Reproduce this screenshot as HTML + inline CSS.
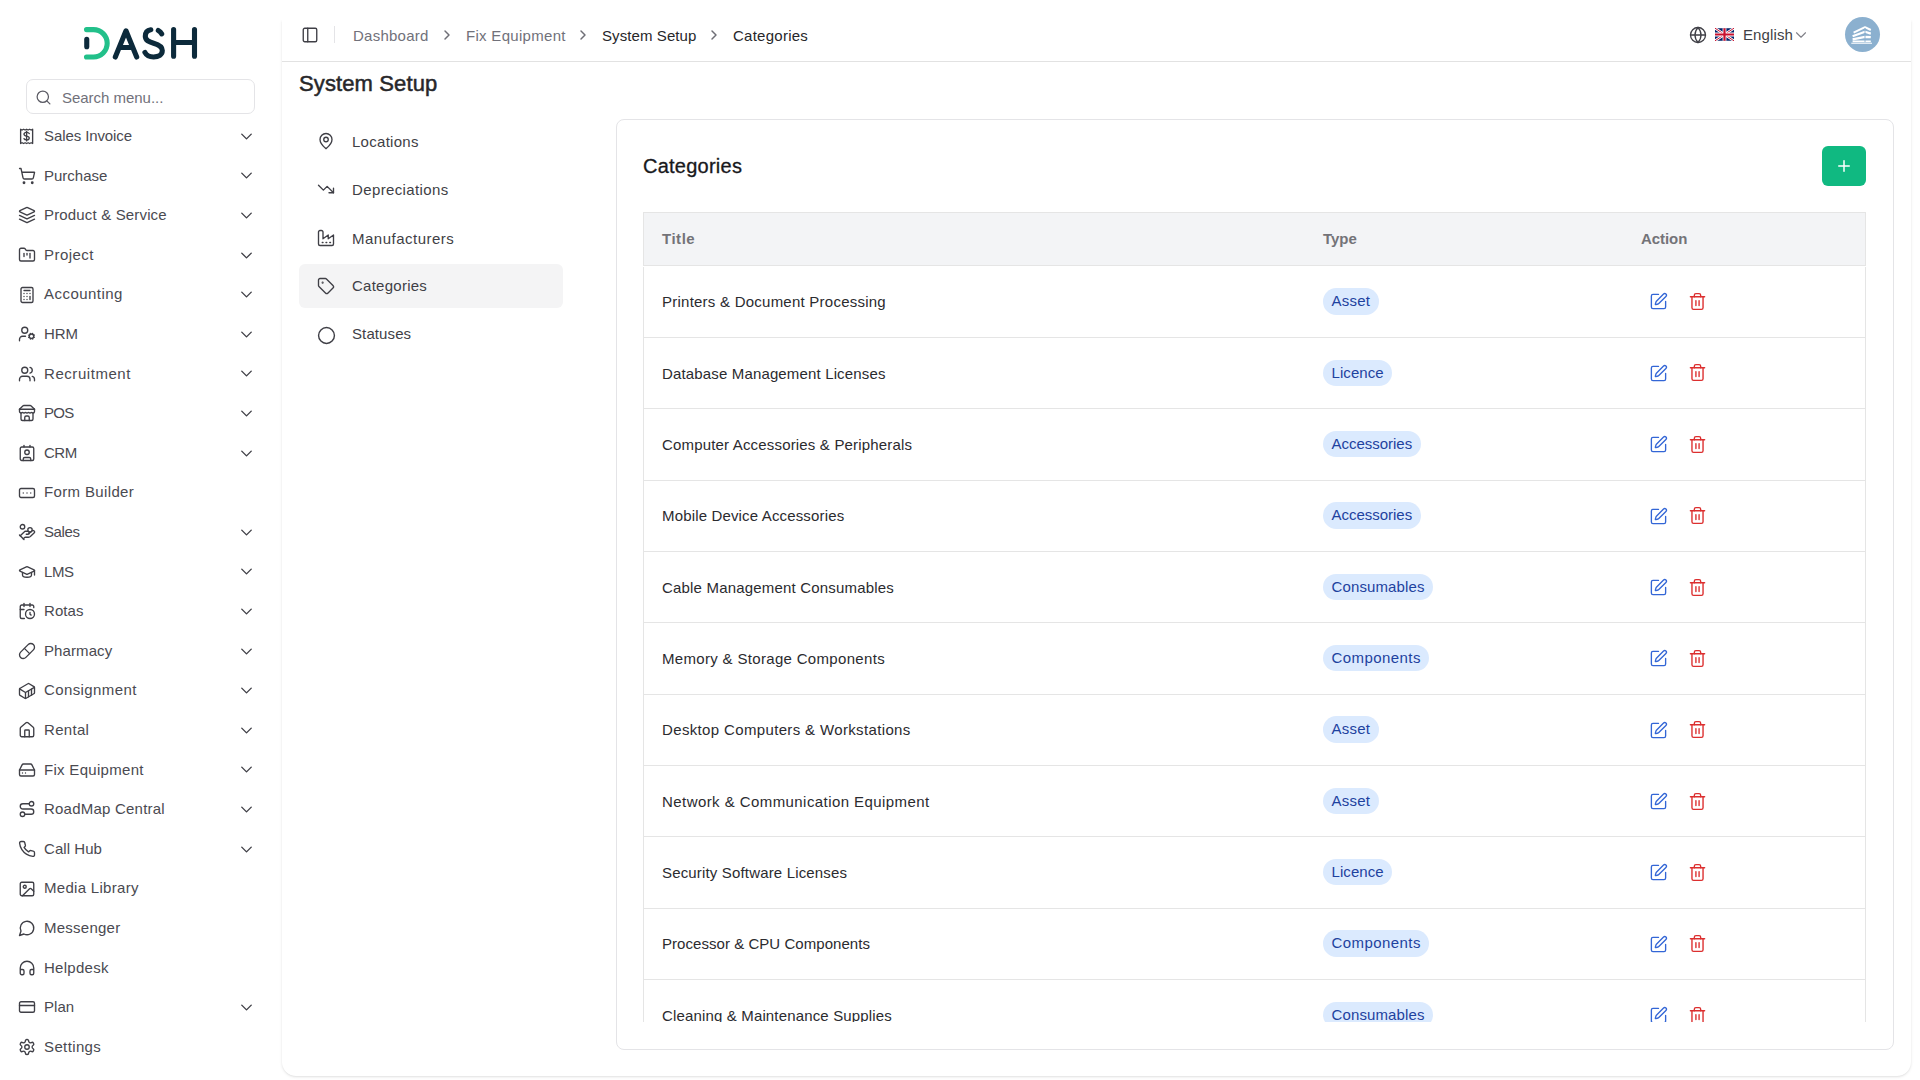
<!DOCTYPE html><html><head><meta charset="utf-8"><title>System Setup</title><style>
*{box-sizing:border-box;margin:0;padding:0}
html,body{width:1920px;height:1080px;overflow:hidden;background:#fff;font-family:"Liberation Sans", sans-serif;color:#3f3f46}
.abs{position:absolute}
svg{display:block}
.side-item{position:absolute;left:0;width:281px;height:40px}
.side-item .ic{position:absolute;left:18px;top:11.3px;color:#3f3f46}
.side-item .tx{position:absolute;left:44px;top:10px;font-size:15px;line-height:20px;white-space:nowrap;color:#4a4a51}
.side-item .cv{position:absolute;left:236.7px;top:10.9px;color:#3f3f46}
.crumb{position:absolute;top:25.5px;font-size:15px;line-height:20px;white-space:nowrap}
.sub{position:absolute;left:299px;width:264px;height:44px;border-radius:6px}
.sub .ic{position:absolute;left:18px;top:12.3px;color:#3f3f46}
.sub .tx{position:absolute;left:53px;top:11.6px;font-size:15px;line-height:20px;color:#3f3f46;white-space:nowrap}
.row{position:absolute;left:643px;width:1223px;border-left:1px solid #e5e5e5;border-right:1px solid #e5e5e5;border-bottom:1px solid #e5e5e5}
.row .t{position:absolute;left:18px;font-size:15px;line-height:20px;color:#2b2b2f;white-space:nowrap}
.badge{position:absolute;left:679px;height:26.5px;border-radius:13.25px;background:#dbeafe;color:#1e429f;font-size:15px;line-height:26.5px;padding:0 8.6px;white-space:nowrap}
.act{position:absolute}
</style></head><body><svg class="abs" style="left:80px;top:24px" width="124" height="40" viewBox="0 0 124 40">
<path d="M6.5 5.6 H13.5 a13.7 13.7 0 0 1 0 27.4 H6.5" fill="none" stroke="#22c08a" stroke-width="5.1" stroke-linecap="round"/>
<line x1="6.75" y1="15.4" x2="6.75" y2="22.8" stroke="#0c2a3b" stroke-width="5.1" stroke-linecap="round"/>
<path d="M35.3 33 L46 6.8 L56.7 33 M40 23.5 H52" fill="none" stroke="#0c2a3b" stroke-width="5.1" stroke-linecap="round" stroke-linejoin="round"/>
<path d="M70.8 5.7 C67.4 6.2 65.3 8.6 65.3 12.3 C65.3 16.6 69.2 18 73.6 19.3 C78.6 20.7 82.3 22.4 82.3 26.6 C82.3 30.8 78.5 33 73.6 33 C69.6 33 66.4 31.3 64.9 28.4" fill="none" stroke="#0c2a3b" stroke-width="5.1" stroke-linecap="round"/>
<path d="M78.3 6.4 C79.8 7.2 81 8.4 81.7 9.9" fill="none" stroke="#0c2a3b" stroke-width="5.1" stroke-linecap="round"/>
<path d="M93.6 5.6 V32.2 M114.5 5.6 V32.2 M93.6 18.5 H114.5" fill="none" stroke="#0c2a3b" stroke-width="5.1" stroke-linecap="round"/>
</svg><div class="abs" style="left:26px;top:79px;width:229px;height:35px;border:1px solid #e4e4e7;border-radius:7px"></div>
<div class="abs" style="left:35.2px;top:88.5px;color:#5a5a63"><svg width="17" height="17" viewBox="0 0 24 24" fill="none" stroke="currentColor" stroke-width="1.75" stroke-linecap="round" stroke-linejoin="round" ><circle cx="11" cy="11" r="8"/><path d="m21 21-4.3-4.3"/></svg></div>
<div class="abs" style="left:62px;top:87.5px;font-size:15px;line-height:20px;color:#71717a;letter-spacing:-0.026px;">Search menu...</div><div class="side-item" style="top:116.00px"><div class="ic"><svg width="18" height="18" viewBox="0 0 24 24" fill="none" stroke="currentColor" stroke-width="1.8" stroke-linecap="round" stroke-linejoin="round" ><path d="M3.5 3v19l2-1 2 1 2-1 2 1 2-1 2 1 2-1 2 1V3l-2 1-2-1-2 1-2-1-2 1-2-1-2 1z"/><path d="M15 8.7c-.5-1-1.6-1.6-3.5-1.6-2 0-3.5 1-3.5 2.5s1.5 2.1 3.5 2.5 3.5 1 3.5 2.5-1.5 2.5-3.5 2.5c-1.9 0-3-.6-3.5-1.6"/><path d="M11.5 5.5v13"/></svg></div><div class="tx" style="letter-spacing:-0.092px;">Sales Invoice</div><div class="cv"><svg width="19" height="19" viewBox="0 0 24 24" fill="none" stroke="currentColor" stroke-width="1.75" stroke-linecap="round" stroke-linejoin="round" ><path d="m6 9 6 6 6-6"/></svg></div></div><div class="side-item" style="top:155.60px"><div class="ic"><svg width="18" height="18" viewBox="0 0 24 24" fill="none" stroke="currentColor" stroke-width="1.8" stroke-linecap="round" stroke-linejoin="round" ><circle cx="8" cy="21" r="1"/><circle cx="19" cy="21" r="1"/><path d="M2.05 2.05h2l2.66 12.42a2 2 0 0 0 2 1.58h9.78a2 2 0 0 0 1.95-1.57l1.65-7.43H5.12"/></svg></div><div class="tx" style="letter-spacing:0.002px;">Purchase</div><div class="cv"><svg width="19" height="19" viewBox="0 0 24 24" fill="none" stroke="currentColor" stroke-width="1.75" stroke-linecap="round" stroke-linejoin="round" ><path d="m6 9 6 6 6-6"/></svg></div></div><div class="side-item" style="top:195.20px"><div class="ic"><svg width="18" height="18" viewBox="0 0 24 24" fill="none" stroke="currentColor" stroke-width="1.8" stroke-linecap="round" stroke-linejoin="round" ><path d="m12.83 2.18a2 2 0 0 0-1.66 0L2.6 6.08a1 1 0 0 0 0 1.83l8.58 3.91a2 2 0 0 0 1.66 0l8.58-3.9a1 1 0 0 0 0-1.83Z"/><path d="m22 17.65-9.17 4.16a2 2 0 0 1-1.66 0L2 17.65"/><path d="m22 12.65-9.17 4.16a2 2 0 0 1-1.66 0L2 12.65"/></svg></div><div class="tx" style="letter-spacing:0.161px;">Product &amp; Service</div><div class="cv"><svg width="19" height="19" viewBox="0 0 24 24" fill="none" stroke="currentColor" stroke-width="1.75" stroke-linecap="round" stroke-linejoin="round" ><path d="m6 9 6 6 6-6"/></svg></div></div><div class="side-item" style="top:234.80px"><div class="ic"><svg width="18" height="18" viewBox="0 0 24 24" fill="none" stroke="currentColor" stroke-width="1.8" stroke-linecap="round" stroke-linejoin="round" ><path d="M4 20h16a2 2 0 0 0 2-2V8a2 2 0 0 0-2-2h-7.93a2 2 0 0 1-1.66-.9l-.82-1.2A2 2 0 0 0 7.93 3H4a2 2 0 0 0-2 2v13c0 1.1.9 2 2 2Z"/><path d="M8 10v4"/><path d="M12 10v2"/><path d="M16 10v6"/></svg></div><div class="tx" style="letter-spacing:0.460px;">Project</div><div class="cv"><svg width="19" height="19" viewBox="0 0 24 24" fill="none" stroke="currentColor" stroke-width="1.75" stroke-linecap="round" stroke-linejoin="round" ><path d="m6 9 6 6 6-6"/></svg></div></div><div class="side-item" style="top:274.40px"><div class="ic"><svg width="18" height="18" viewBox="0 0 24 24" fill="none" stroke="currentColor" stroke-width="1.8" stroke-linecap="round" stroke-linejoin="round" ><rect width="16" height="20" x="4" y="2" rx="2"/><line x1="8" x2="16" y1="6" y2="6"/><line x1="16" x2="16" y1="14" y2="18"/><path d="M16 10h.01"/><path d="M12 10h.01"/><path d="M8 10h.01"/><path d="M12 14h.01"/><path d="M8 14h.01"/><path d="M12 18h.01"/><path d="M8 18h.01"/></svg></div><div class="tx" style="letter-spacing:0.468px;">Accounting</div><div class="cv"><svg width="19" height="19" viewBox="0 0 24 24" fill="none" stroke="currentColor" stroke-width="1.75" stroke-linecap="round" stroke-linejoin="round" ><path d="m6 9 6 6 6-6"/></svg></div></div><div class="side-item" style="top:314.00px"><div class="ic"><svg width="18" height="18" viewBox="0 0 24 24" fill="none" stroke="currentColor" stroke-width="1.8" stroke-linecap="round" stroke-linejoin="round" ><circle cx="18" cy="15" r="3"/><circle cx="9" cy="7" r="4"/><path d="M10 15H6a4 4 0 0 0-4 4v2"/><path d="m21.7 16.4-.9-.3"/><path d="m15.2 13.9-.9-.3"/><path d="m16.6 18.7.3-.9"/><path d="m19.1 12.2.3-.9"/><path d="m19.6 18.7-.4-1"/><path d="m16.8 12.3-.4-1"/><path d="m14.3 16.6 1-.4"/><path d="m20.7 13.8 1-.4"/></svg></div><div class="tx" style="letter-spacing:-0.054px;">HRM</div><div class="cv"><svg width="19" height="19" viewBox="0 0 24 24" fill="none" stroke="currentColor" stroke-width="1.75" stroke-linecap="round" stroke-linejoin="round" ><path d="m6 9 6 6 6-6"/></svg></div></div><div class="side-item" style="top:353.60px"><div class="ic"><svg width="18" height="18" viewBox="0 0 24 24" fill="none" stroke="currentColor" stroke-width="1.8" stroke-linecap="round" stroke-linejoin="round" ><path d="M16 21v-2a4 4 0 0 0-4-4H6a4 4 0 0 0-4 4v2"/><circle cx="9" cy="7" r="4"/><path d="M22 21v-2a4 4 0 0 0-3-3.87"/><path d="M16 3.13a4 4 0 0 1 0 7.75"/></svg></div><div class="tx" style="letter-spacing:0.557px;">Recruitment</div><div class="cv"><svg width="19" height="19" viewBox="0 0 24 24" fill="none" stroke="currentColor" stroke-width="1.75" stroke-linecap="round" stroke-linejoin="round" ><path d="m6 9 6 6 6-6"/></svg></div></div><div class="side-item" style="top:393.20px"><div class="ic"><svg width="18" height="18" viewBox="0 0 24 24" fill="none" stroke="currentColor" stroke-width="1.8" stroke-linecap="round" stroke-linejoin="round" ><path d="m2 7 4.41-4.41A2 2 0 0 1 7.83 2h8.34a2 2 0 0 1 1.42.59L22 7"/><path d="M4 12v8a2 2 0 0 0 2 2h12a2 2 0 0 0 2-2v-8"/><path d="M15 22v-4a2 2 0 0 0-2-2h-2a2 2 0 0 0-2 2v4"/><path d="M2 7h20"/><path d="M22 7v3a2 2 0 0 1-2 2a2.7 2.7 0 0 1-1.59-.63.7.7 0 0 0-.82 0A2.7 2.7 0 0 1 16 12a2.7 2.7 0 0 1-1.59-.63.7.7 0 0 0-.82 0A2.7 2.7 0 0 1 12 12a2.7 2.7 0 0 1-1.59-.63.7.7 0 0 0-.82 0A2.7 2.7 0 0 1 8 12a2.7 2.7 0 0 1-1.59-.63.7.7 0 0 0-.82 0A2.7 2.7 0 0 1 4 12a2 2 0 0 1-2-2V7"/></svg></div><div class="tx" style="letter-spacing:-0.735px;">POS</div><div class="cv"><svg width="19" height="19" viewBox="0 0 24 24" fill="none" stroke="currentColor" stroke-width="1.75" stroke-linecap="round" stroke-linejoin="round" ><path d="m6 9 6 6 6-6"/></svg></div></div><div class="side-item" style="top:432.80px"><div class="ic"><svg width="18" height="18" viewBox="0 0 24 24" fill="none" stroke="currentColor" stroke-width="1.8" stroke-linecap="round" stroke-linejoin="round" ><path d="M16 2v2"/><path d="M7 22v-2a2 2 0 0 1 2-2h6a2 2 0 0 1 2 2v2"/><path d="M8 2v2"/><circle cx="12" cy="11" r="3"/><rect x="3" y="4" width="18" height="18" rx="2"/></svg></div><div class="tx" style="letter-spacing:-0.491px;">CRM</div><div class="cv"><svg width="19" height="19" viewBox="0 0 24 24" fill="none" stroke="currentColor" stroke-width="1.75" stroke-linecap="round" stroke-linejoin="round" ><path d="m6 9 6 6 6-6"/></svg></div></div><div class="side-item" style="top:472.40px"><div class="ic"><svg width="18" height="18" viewBox="0 0 24 24" fill="none" stroke="currentColor" stroke-width="1.8" stroke-linecap="round" stroke-linejoin="round" ><rect width="20" height="12" x="2" y="6" rx="2"/><path d="M12 12h.01"/><path d="M17 12h.01"/><path d="M7 12h.01"/></svg></div><div class="tx" style="letter-spacing:0.360px;">Form Builder</div></div><div class="side-item" style="top:512.00px"><div class="ic"><svg width="18" height="18" viewBox="0 0 24 24" fill="none" stroke="currentColor" stroke-width="1.8" stroke-linecap="round" stroke-linejoin="round" ><path d="M11 15h2a2 2 0 1 0 0-4h-3c-.6 0-1.1.2-1.4.6L3 17"/><path d="m7 21 1.6-1.4c.3-.4.8-.6 1.4-.6h4c1.1 0 2.1-.4 2.8-1.2l4.6-4.4a2 2 0 0 0-2.75-2.91l-4.2 3.9"/><path d="m2 16 6 6"/><circle cx="16" cy="9" r="2.9"/><circle cx="6" cy="5" r="3"/></svg></div><div class="tx" style="letter-spacing:-0.404px;">Sales</div><div class="cv"><svg width="19" height="19" viewBox="0 0 24 24" fill="none" stroke="currentColor" stroke-width="1.75" stroke-linecap="round" stroke-linejoin="round" ><path d="m6 9 6 6 6-6"/></svg></div></div><div class="side-item" style="top:551.60px"><div class="ic"><svg width="18" height="18" viewBox="0 0 24 24" fill="none" stroke="currentColor" stroke-width="1.8" stroke-linecap="round" stroke-linejoin="round" ><path d="M21.42 10.922a1 1 0 0 0-.019-1.838L12.83 5.18a2 2 0 0 0-1.66 0L2.6 9.08a1 1 0 0 0 0 1.832l8.57 3.908a2 2 0 0 0 1.66 0z"/><path d="M22 10v6"/><path d="M6 12.5V16a6 3 0 0 0 12 0v-3.5"/></svg></div><div class="tx" style="letter-spacing:-0.438px;">LMS</div><div class="cv"><svg width="19" height="19" viewBox="0 0 24 24" fill="none" stroke="currentColor" stroke-width="1.75" stroke-linecap="round" stroke-linejoin="round" ><path d="m6 9 6 6 6-6"/></svg></div></div><div class="side-item" style="top:591.20px"><div class="ic"><svg width="18" height="18" viewBox="0 0 24 24" fill="none" stroke="currentColor" stroke-width="1.8" stroke-linecap="round" stroke-linejoin="round" ><path d="M21 7.5V6a2 2 0 0 0-2-2H5a2 2 0 0 0-2 2v14a2 2 0 0 0 2 2h3.5"/><path d="M16 2v4"/><path d="M8 2v4"/><path d="M3 10h5"/><path d="M17.5 17.5 16 16.3V14"/><circle cx="16" cy="16" r="6"/></svg></div><div class="tx" style="letter-spacing:0.067px;">Rotas</div><div class="cv"><svg width="19" height="19" viewBox="0 0 24 24" fill="none" stroke="currentColor" stroke-width="1.75" stroke-linecap="round" stroke-linejoin="round" ><path d="m6 9 6 6 6-6"/></svg></div></div><div class="side-item" style="top:630.80px"><div class="ic"><svg width="18" height="18" viewBox="0 0 24 24" fill="none" stroke="currentColor" stroke-width="1.8" stroke-linecap="round" stroke-linejoin="round" ><path d="m10.5 20.5 10-10a4.95 4.95 0 1 0-7-7l-10 10a4.95 4.95 0 1 0 7 7Z"/><path d="m8.5 8.5 7 7"/></svg></div><div class="tx" style="letter-spacing:0.093px;">Pharmacy</div><div class="cv"><svg width="19" height="19" viewBox="0 0 24 24" fill="none" stroke="currentColor" stroke-width="1.75" stroke-linecap="round" stroke-linejoin="round" ><path d="m6 9 6 6 6-6"/></svg></div></div><div class="side-item" style="top:670.40px"><div class="ic"><svg width="18" height="18" viewBox="0 0 24 24" fill="none" stroke="currentColor" stroke-width="1.8" stroke-linecap="round" stroke-linejoin="round" ><path d="M22 7.7c0-.6-.4-1.2-.8-1.5l-6.3-3.9a1.72 1.72 0 0 0-1.7 0l-10.3 6c-.5.2-.9.8-.9 1.4v6.6c0 .5.4 1.2.8 1.5l6.3 3.9a1.72 1.72 0 0 0 1.7 0l10.3-6c.5-.3.9-1 .9-1.5Z"/><path d="M10 21.9V14L2.1 9.1"/><path d="m10 14 11.9-6.9"/><path d="M14 19.8v-8.1"/><path d="M18 17.5V9.4"/></svg></div><div class="tx" style="letter-spacing:0.392px;">Consignment</div><div class="cv"><svg width="19" height="19" viewBox="0 0 24 24" fill="none" stroke="currentColor" stroke-width="1.75" stroke-linecap="round" stroke-linejoin="round" ><path d="m6 9 6 6 6-6"/></svg></div></div><div class="side-item" style="top:710.00px"><div class="ic"><svg width="18" height="18" viewBox="0 0 24 24" fill="none" stroke="currentColor" stroke-width="1.8" stroke-linecap="round" stroke-linejoin="round" ><path d="M15 21v-8a1 1 0 0 0-1-1h-4a1 1 0 0 0-1 1v8"/><path d="M3 10a2 2 0 0 1 .709-1.528l7-5.999a2 2 0 0 1 2.582 0l7 5.999A2 2 0 0 1 21 10v9a2 2 0 0 1-2 2H5a2 2 0 0 1-2-2z"/></svg></div><div class="tx" style="letter-spacing:0.307px;">Rental</div><div class="cv"><svg width="19" height="19" viewBox="0 0 24 24" fill="none" stroke="currentColor" stroke-width="1.75" stroke-linecap="round" stroke-linejoin="round" ><path d="m6 9 6 6 6-6"/></svg></div></div><div class="side-item" style="top:749.60px"><div class="ic"><svg width="18" height="18" viewBox="0 0 24 24" fill="none" stroke="currentColor" stroke-width="1.8" stroke-linecap="round" stroke-linejoin="round" ><line x1="22" x2="2" y1="12" y2="12"/><path d="M5.45 5.11 2 12v6a2 2 0 0 0 2 2h16a2 2 0 0 0 2-2v-6l-3.45-6.89A2 2 0 0 0 16.76 4H7.24a2 2 0 0 0-1.79 1.11z"/><line x1="6" x2="6.01" y1="16" y2="16"/><line x1="10" x2="10.01" y1="16" y2="16"/></svg></div><div class="tx" style="letter-spacing:0.300px;">Fix Equipment</div><div class="cv"><svg width="19" height="19" viewBox="0 0 24 24" fill="none" stroke="currentColor" stroke-width="1.75" stroke-linecap="round" stroke-linejoin="round" ><path d="m6 9 6 6 6-6"/></svg></div></div><div class="side-item" style="top:789.20px"><div class="ic"><svg width="18" height="18" viewBox="0 0 24 24" fill="none" stroke="currentColor" stroke-width="1.8" stroke-linecap="round" stroke-linejoin="round" ><circle cx="6" cy="19" r="3"/><path d="M9 19h8.5a3.5 3.5 0 0 0 0-7h-11a3.5 3.5 0 0 1 0-7H15"/><circle cx="18" cy="5" r="3"/></svg></div><div class="tx" style="letter-spacing:0.219px;">RoadMap Central</div><div class="cv"><svg width="19" height="19" viewBox="0 0 24 24" fill="none" stroke="currentColor" stroke-width="1.75" stroke-linecap="round" stroke-linejoin="round" ><path d="m6 9 6 6 6-6"/></svg></div></div><div class="side-item" style="top:828.80px"><div class="ic"><svg width="18" height="18" viewBox="0 0 24 24" fill="none" stroke="currentColor" stroke-width="1.8" stroke-linecap="round" stroke-linejoin="round" ><path d="M22 16.92v3a2 2 0 0 1-2.18 2 19.79 19.79 0 0 1-8.63-3.07 19.5 19.5 0 0 1-6-6 19.79 19.79 0 0 1-3.07-8.67A2 2 0 0 1 4.11 2h3a2 2 0 0 1 2 1.72 12.84 12.84 0 0 0 .7 2.81 2 2 0 0 1-.45 2.11L8.09 9.91a16 16 0 0 0 6 6l1.27-1.27a2 2 0 0 1 2.11-.45 12.84 12.84 0 0 0 2.81.7A2 2 0 0 1 22 16.92z"/></svg></div><div class="tx" style="letter-spacing:0.056px;">Call Hub</div><div class="cv"><svg width="19" height="19" viewBox="0 0 24 24" fill="none" stroke="currentColor" stroke-width="1.75" stroke-linecap="round" stroke-linejoin="round" ><path d="m6 9 6 6 6-6"/></svg></div></div><div class="side-item" style="top:868.40px"><div class="ic"><svg width="18" height="18" viewBox="0 0 24 24" fill="none" stroke="currentColor" stroke-width="1.8" stroke-linecap="round" stroke-linejoin="round" ><rect width="18" height="18" x="3" y="3" rx="2"/><circle cx="9" cy="9" r="2"/><path d="m21 15-3.086-3.086a2 2 0 0 0-2.828 0L6 21"/></svg></div><div class="tx" style="letter-spacing:0.299px;">Media Library</div></div><div class="side-item" style="top:908.00px"><div class="ic"><svg width="18" height="18" viewBox="0 0 24 24" fill="none" stroke="currentColor" stroke-width="1.8" stroke-linecap="round" stroke-linejoin="round" ><path d="M7.9 20A9 9 0 1 0 4 16.1L2 22Z"/></svg></div><div class="tx" style="letter-spacing:0.240px;">Messenger</div></div><div class="side-item" style="top:947.60px"><div class="ic"><svg width="18" height="18" viewBox="0 0 24 24" fill="none" stroke="currentColor" stroke-width="1.8" stroke-linecap="round" stroke-linejoin="round" ><path d="M3 14h3a2 2 0 0 1 2 2v3a2 2 0 0 1-2 2H5a2 2 0 0 1-2-2v-7a9 9 0 0 1 18 0v7a2 2 0 0 1-2 2h-1a2 2 0 0 1-2-2v-3a2 2 0 0 1 2-2h3"/></svg></div><div class="tx" style="letter-spacing:0.280px;">Helpdesk</div></div><div class="side-item" style="top:987.20px"><div class="ic"><svg width="18" height="18" viewBox="0 0 24 24" fill="none" stroke="currentColor" stroke-width="1.8" stroke-linecap="round" stroke-linejoin="round" ><rect width="20" height="14" x="2" y="5" rx="2"/><line x1="2" x2="22" y1="10" y2="10"/></svg></div><div class="tx" style="letter-spacing:0.053px;">Plan</div><div class="cv"><svg width="19" height="19" viewBox="0 0 24 24" fill="none" stroke="currentColor" stroke-width="1.75" stroke-linecap="round" stroke-linejoin="round" ><path d="m6 9 6 6 6-6"/></svg></div></div><div class="side-item" style="top:1026.80px"><div class="ic"><svg width="18" height="18" viewBox="0 0 24 24" fill="none" stroke="currentColor" stroke-width="1.8" stroke-linecap="round" stroke-linejoin="round" ><path d="M12.22 2h-.44a2 2 0 0 0-2 2v.18a2 2 0 0 1-1 1.73l-.43.25a2 2 0 0 1-2 0l-.15-.08a2 2 0 0 0-2.73.73l-.22.38a2 2 0 0 0 .73 2.73l.15.1a2 2 0 0 1 1 1.72v.51a2 2 0 0 1-1 1.74l-.15.09a2 2 0 0 0-.73 2.73l.22.38a2 2 0 0 0 2.73.73l.15-.08a2 2 0 0 1 2 0l.43.25a2 2 0 0 1 1 1.73V20a2 2 0 0 0 2 2h.44a2 2 0 0 0 2-2v-.18a2 2 0 0 1 1-1.73l.43-.25a2 2 0 0 1 2 0l.15.08a2 2 0 0 0 2.73-.73l.22-.39a2 2 0 0 0-.73-2.73l-.15-.08a2 2 0 0 1-1-1.74v-.5a2 2 0 0 1 1-1.74l.15-.09a2 2 0 0 0 .73-2.73l-.22-.38a2 2 0 0 0-2.73-.73l-.15.08a2 2 0 0 1-2 0l-.43-.25a2 2 0 0 1-1-1.73V4a2 2 0 0 0-2-2z"/><circle cx="12" cy="12" r="3"/></svg></div><div class="tx" style="letter-spacing:0.377px;">Settings</div></div><div class="abs" style="left:282px;top:20px;width:1629px;height:1056px;background:#fff;border-radius:0 0 14px 14px;clip-path:inset(0 -10px -10px -10px);box-shadow:0 1px 3px 0 rgba(0,0,0,.1), 0 1px 2px -1px rgba(0,0,0,.1)"></div><div class="abs" style="left:282px;top:61px;width:1629px;height:1px;background:#e2e2e2"></div><div class="abs" style="left:300.8px;top:25.8px;color:#3f3f46"><svg width="18" height="18" viewBox="0 0 24 24" fill="none" stroke="currentColor" stroke-width="1.8" stroke-linecap="round" stroke-linejoin="round" ><rect width="18" height="18" x="3" y="3" rx="2"/><path d="M9 3v18"/></svg></div><div class="abs" style="left:334px;top:26px;width:1px;height:17px;background:#e4e4e7"></div><div class="crumb" style="left:353px;color:#71717a;letter-spacing:0.251px;">Dashboard</div><div class="crumb" style="left:466px;color:#71717a;letter-spacing:0.300px;">Fix Equipment</div><div class="crumb" style="left:602px;color:#27272a;letter-spacing:0.093px;">System Setup</div><div class="crumb" style="left:733px;color:#27272a;letter-spacing:0.259px;">Categories</div><div class="abs" style="left:438.7px;top:26.8px;color:#6e6e76"><svg width="16" height="16" viewBox="0 0 24 24" fill="none" stroke="currentColor" stroke-width="2.2" stroke-linecap="round" stroke-linejoin="round" ><path d="m9 18 6-6-6-6"/></svg></div><div class="abs" style="left:574.5px;top:26.8px;color:#6e6e76"><svg width="16" height="16" viewBox="0 0 24 24" fill="none" stroke="currentColor" stroke-width="2.2" stroke-linecap="round" stroke-linejoin="round" ><path d="m9 18 6-6-6-6"/></svg></div><div class="abs" style="left:705.5px;top:26.8px;color:#6e6e76"><svg width="16" height="16" viewBox="0 0 24 24" fill="none" stroke="currentColor" stroke-width="2.2" stroke-linecap="round" stroke-linejoin="round" ><path d="m9 18 6-6-6-6"/></svg></div><div class="abs" style="left:1688.8px;top:25.7px;color:#3f3f46"><svg width="18" height="18" viewBox="0 0 24 24" fill="none" stroke="currentColor" stroke-width="1.75" stroke-linecap="round" stroke-linejoin="round" ><circle cx="12" cy="12" r="10"/><path d="M12 2a14.5 14.5 0 0 0 0 20 14.5 14.5 0 0 0 0-20"/><path d="M2 12h20"/></svg></div><svg class="abs" style="left:1715px;top:28px" width="19" height="13" viewBox="0 0 60 40">
<rect width="60" height="40" fill="#012169" rx="3"/>
<path d="M0 0 L60 40 M60 0 L0 40" stroke="#fff" stroke-width="8"/>
<path d="M0 0 L60 40 M60 0 L0 40" stroke="#C8102E" stroke-width="3"/>
<path d="M30 0 V40 M0 20 H60" stroke="#fff" stroke-width="12"/>
<path d="M30 0 V40 M0 20 H60" stroke="#C8102E" stroke-width="7"/>
</svg><div class="abs" style="left:1743px;top:25.3px;font-size:15px;line-height:20px;color:#3f3f46;letter-spacing:0.107px;">English</div><div class="abs" style="left:1791.5px;top:25.5px;color:#808088"><svg width="18" height="18" viewBox="0 0 24 24" fill="none" stroke="currentColor" stroke-width="1.5" stroke-linecap="round" stroke-linejoin="round" ><path d="m6 9 6 6 6-6"/></svg></div><div class="abs" style="left:1845px;top:17px;width:35px;height:35px;border-radius:50%;background:#8bb0cf;overflow:hidden">
<svg width="35" height="35" viewBox="0 0 35 35"><g fill="none" stroke="#fff" stroke-linecap="butt" stroke-linejoin="round">
<path d="M8.6 15.6 L20 10.2 L25.8 13" stroke-width="2"/>
<path d="M7.6 19.2 L20 14.8 L25.8 16.6" stroke-width="2.2"/>
<path d="M7.6 22.3 L20 19.9 L25.8 20.2" stroke-width="2.2"/>
<path d="M7.6 24.4 H25.8" stroke-width="1.6"/>
<path d="M6.3 26.2 H27" stroke-width="1.1"/>
</g><path d="M20 11 V25" stroke="#8bb0cf" stroke-width="0.9"/></svg></div><div class="abs" style="left:299px;top:70px;font-size:22px;line-height:28px;-webkit-text-stroke:0.5px #27272a;color:#27272a;letter-spacing:0.117px;">System Setup</div><div class="sub" style="top:264px;background:#f4f4f5"></div><div class="sub" style="top:120.00px"><div class="ic"><svg width="18" height="18" viewBox="0 0 24 24" fill="none" stroke="currentColor" stroke-width="1.8" stroke-linecap="round" stroke-linejoin="round" ><path d="M20 10c0 4.993-5.539 10.193-7.399 11.799a1 1 0 0 1-1.202 0C9.539 20.193 4 14.993 4 10a8 8 0 0 1 16 0"/><circle cx="12" cy="10" r="3"/></svg></div><div class="tx" style="letter-spacing:0.277px;">Locations</div></div><div class="sub" style="top:168.00px"><div class="ic"><svg width="18" height="18" viewBox="0 0 24 24" fill="none" stroke="currentColor" stroke-width="1.8" stroke-linecap="round" stroke-linejoin="round" ><path d="M16 17h6v-6"/><path d="m22 17-8.5-8.5-5 5L2 7"/></svg></div><div class="tx" style="letter-spacing:0.375px;">Depreciations</div></div><div class="sub" style="top:217.00px"><div class="ic"><svg width="18" height="18" viewBox="0 0 24 24" fill="none" stroke="currentColor" stroke-width="1.8" stroke-linecap="round" stroke-linejoin="round" ><path d="M2 20a2 2 0 0 0 2 2h16a2 2 0 0 0 2-2V8l-7 5V8l-7 5V4a2 2 0 0 0-2-2H4a2 2 0 0 0-2 2Z"/><path d="M17 18h1"/><path d="M12 18h1"/><path d="M7 18h1"/></svg></div><div class="tx" style="letter-spacing:0.497px;">Manufacturers</div></div><div class="sub" style="top:264.50px"><div class="ic"><svg width="18" height="18" viewBox="0 0 24 24" fill="none" stroke="currentColor" stroke-width="1.8" stroke-linecap="round" stroke-linejoin="round" ><path d="M12.586 2.586A2 2 0 0 0 11.172 2H4a2 2 0 0 0-2 2v7.172a2 2 0 0 0 .586 1.414l8.704 8.704a2.426 2.426 0 0 0 3.42 0l6.58-6.58a2.426 2.426 0 0 0 0-3.42z"/><circle cx="7.5" cy="7.5" r=".5" fill="currentColor"/></svg></div><div class="tx" style="letter-spacing:0.259px;">Categories</div></div><div class="sub" style="top:312.00px"><div class="ic" style="top:13.8px;left:17.5px"><svg width="19" height="19" viewBox="0 0 24 24" fill="none" stroke="currentColor" stroke-width="1.8" stroke-linecap="round" stroke-linejoin="round" ><circle cx="12" cy="12" r="10"/></svg></div><div class="tx" style="letter-spacing:0.104px;">Statuses</div></div><div class="abs" style="left:616px;top:119px;width:1278px;height:931px;border:1px solid #e4e4e7;border-radius:8px;background:#fff"></div><div class="abs" style="left:643px;top:154px;font-size:20px;line-height:24px;-webkit-text-stroke:0.3px #18181b;color:#18181b;letter-spacing:0.241px;">Categories</div><div class="abs" style="left:1822px;top:146px;width:44px;height:40px;border-radius:6px;background:#10b981;color:#fff"><div style="position:absolute;left:13px;top:11px"><svg width="18" height="18" viewBox="0 0 24 24" fill="none" stroke="currentColor" stroke-width="2" stroke-linecap="round" stroke-linejoin="round" ><path d="M5 12h14"/><path d="M12 5v14"/></svg></div></div><div class="abs" style="left:0;top:0;width:1920px;height:1022px;overflow:hidden"><div class="abs" style="left:643px;top:212px;width:1223px;height:54px;background:#f3f4f6;border:1px solid #e5e5e5"></div><div class="abs" style="left:662px;top:229.3px;font-size:15px;line-height:20px;font-weight:bold;color:#737378;letter-spacing:0.531px;">Title</div><div class="abs" style="left:1323px;top:229.3px;font-size:15px;line-height:20px;font-weight:bold;color:#737378;letter-spacing:-0.055px;">Type</div><div class="abs" style="left:1641px;top:229.3px;font-size:15px;line-height:20px;font-weight:bold;color:#737378;letter-spacing:-0.073px;">Action</div><div class="row" style="top:266.60px;height:71.35px"><div class="t" style="top:25.6px;letter-spacing:0.240px;">Printers &amp; Document Processing</div><div class="badge" style="top:21.6px;letter-spacing:0.185px;">Asset</div><div class="act" style="left:1005.2px;top:25.9px;color:#3366d6"><svg width="19" height="19" viewBox="0 0 24 24" fill="none" stroke="currentColor" stroke-width="1.7" stroke-linecap="round" stroke-linejoin="round" ><path d="M12 3H5a2 2 0 0 0-2 2v14a2 2 0 0 0 2 2h14a2 2 0 0 0 2-2v-7"/><path d="M18.375 2.625a1 1 0 0 1 3 3l-9.013 9.014a2 2 0 0 1-.853.505l-2.873.84a.5.5 0 0 1-.62-.62l.84-2.873a2 2 0 0 1 .506-.852z"/></svg></div><div class="act" style="left:1044.2px;top:25.5px;color:#dc2f2f"><svg width="19" height="19" viewBox="0 0 24 24" fill="none" stroke="currentColor" stroke-width="1.75" stroke-linecap="round" stroke-linejoin="round" ><path d="M3 6h18"/><path d="M19 6v14c0 1-1 2-2 2H7c-1 0-2-1-2-2V6"/><path d="M8 6V4c0-1 1-2 2-2h4c1 0 2 1 2 2v2"/><line x1="10" x2="10" y1="11" y2="17"/><line x1="14" x2="14" y1="11" y2="17"/></svg></div></div><div class="row" style="top:337.95px;height:71.35px"><div class="t" style="top:25.6px;letter-spacing:0.152px;">Database Management Licenses</div><div class="badge" style="top:21.6px;letter-spacing:0.046px;">Licence</div><div class="act" style="left:1005.2px;top:25.9px;color:#3366d6"><svg width="19" height="19" viewBox="0 0 24 24" fill="none" stroke="currentColor" stroke-width="1.7" stroke-linecap="round" stroke-linejoin="round" ><path d="M12 3H5a2 2 0 0 0-2 2v14a2 2 0 0 0 2 2h14a2 2 0 0 0 2-2v-7"/><path d="M18.375 2.625a1 1 0 0 1 3 3l-9.013 9.014a2 2 0 0 1-.853.505l-2.873.84a.5.5 0 0 1-.62-.62l.84-2.873a2 2 0 0 1 .506-.852z"/></svg></div><div class="act" style="left:1044.2px;top:25.5px;color:#dc2f2f"><svg width="19" height="19" viewBox="0 0 24 24" fill="none" stroke="currentColor" stroke-width="1.75" stroke-linecap="round" stroke-linejoin="round" ><path d="M3 6h18"/><path d="M19 6v14c0 1-1 2-2 2H7c-1 0-2-1-2-2V6"/><path d="M8 6V4c0-1 1-2 2-2h4c1 0 2 1 2 2v2"/><line x1="10" x2="10" y1="11" y2="17"/><line x1="14" x2="14" y1="11" y2="17"/></svg></div></div><div class="row" style="top:409.30px;height:71.35px"><div class="t" style="top:25.6px;letter-spacing:0.173px;">Computer Accessories &amp; Peripherals</div><div class="badge" style="top:21.6px;letter-spacing:-0.031px;">Accessories</div><div class="act" style="left:1005.2px;top:25.9px;color:#3366d6"><svg width="19" height="19" viewBox="0 0 24 24" fill="none" stroke="currentColor" stroke-width="1.7" stroke-linecap="round" stroke-linejoin="round" ><path d="M12 3H5a2 2 0 0 0-2 2v14a2 2 0 0 0 2 2h14a2 2 0 0 0 2-2v-7"/><path d="M18.375 2.625a1 1 0 0 1 3 3l-9.013 9.014a2 2 0 0 1-.853.505l-2.873.84a.5.5 0 0 1-.62-.62l.84-2.873a2 2 0 0 1 .506-.852z"/></svg></div><div class="act" style="left:1044.2px;top:25.5px;color:#dc2f2f"><svg width="19" height="19" viewBox="0 0 24 24" fill="none" stroke="currentColor" stroke-width="1.75" stroke-linecap="round" stroke-linejoin="round" ><path d="M3 6h18"/><path d="M19 6v14c0 1-1 2-2 2H7c-1 0-2-1-2-2V6"/><path d="M8 6V4c0-1 1-2 2-2h4c1 0 2 1 2 2v2"/><line x1="10" x2="10" y1="11" y2="17"/><line x1="14" x2="14" y1="11" y2="17"/></svg></div></div><div class="row" style="top:480.65px;height:71.35px"><div class="t" style="top:25.6px;letter-spacing:0.157px;">Mobile Device Accessories</div><div class="badge" style="top:21.6px;letter-spacing:-0.031px;">Accessories</div><div class="act" style="left:1005.2px;top:25.9px;color:#3366d6"><svg width="19" height="19" viewBox="0 0 24 24" fill="none" stroke="currentColor" stroke-width="1.7" stroke-linecap="round" stroke-linejoin="round" ><path d="M12 3H5a2 2 0 0 0-2 2v14a2 2 0 0 0 2 2h14a2 2 0 0 0 2-2v-7"/><path d="M18.375 2.625a1 1 0 0 1 3 3l-9.013 9.014a2 2 0 0 1-.853.505l-2.873.84a.5.5 0 0 1-.62-.62l.84-2.873a2 2 0 0 1 .506-.852z"/></svg></div><div class="act" style="left:1044.2px;top:25.5px;color:#dc2f2f"><svg width="19" height="19" viewBox="0 0 24 24" fill="none" stroke="currentColor" stroke-width="1.75" stroke-linecap="round" stroke-linejoin="round" ><path d="M3 6h18"/><path d="M19 6v14c0 1-1 2-2 2H7c-1 0-2-1-2-2V6"/><path d="M8 6V4c0-1 1-2 2-2h4c1 0 2 1 2 2v2"/><line x1="10" x2="10" y1="11" y2="17"/><line x1="14" x2="14" y1="11" y2="17"/></svg></div></div><div class="row" style="top:552.00px;height:71.35px"><div class="t" style="top:25.6px;letter-spacing:0.185px;">Cable Management Consumables</div><div class="badge" style="top:21.6px;letter-spacing:0.107px;">Consumables</div><div class="act" style="left:1005.2px;top:25.9px;color:#3366d6"><svg width="19" height="19" viewBox="0 0 24 24" fill="none" stroke="currentColor" stroke-width="1.7" stroke-linecap="round" stroke-linejoin="round" ><path d="M12 3H5a2 2 0 0 0-2 2v14a2 2 0 0 0 2 2h14a2 2 0 0 0 2-2v-7"/><path d="M18.375 2.625a1 1 0 0 1 3 3l-9.013 9.014a2 2 0 0 1-.853.505l-2.873.84a.5.5 0 0 1-.62-.62l.84-2.873a2 2 0 0 1 .506-.852z"/></svg></div><div class="act" style="left:1044.2px;top:25.5px;color:#dc2f2f"><svg width="19" height="19" viewBox="0 0 24 24" fill="none" stroke="currentColor" stroke-width="1.75" stroke-linecap="round" stroke-linejoin="round" ><path d="M3 6h18"/><path d="M19 6v14c0 1-1 2-2 2H7c-1 0-2-1-2-2V6"/><path d="M8 6V4c0-1 1-2 2-2h4c1 0 2 1 2 2v2"/><line x1="10" x2="10" y1="11" y2="17"/><line x1="14" x2="14" y1="11" y2="17"/></svg></div></div><div class="row" style="top:623.35px;height:71.35px"><div class="t" style="top:25.6px;letter-spacing:0.323px;">Memory &amp; Storage Components</div><div class="badge" style="top:21.6px;letter-spacing:0.422px;">Components</div><div class="act" style="left:1005.2px;top:25.9px;color:#3366d6"><svg width="19" height="19" viewBox="0 0 24 24" fill="none" stroke="currentColor" stroke-width="1.7" stroke-linecap="round" stroke-linejoin="round" ><path d="M12 3H5a2 2 0 0 0-2 2v14a2 2 0 0 0 2 2h14a2 2 0 0 0 2-2v-7"/><path d="M18.375 2.625a1 1 0 0 1 3 3l-9.013 9.014a2 2 0 0 1-.853.505l-2.873.84a.5.5 0 0 1-.62-.62l.84-2.873a2 2 0 0 1 .506-.852z"/></svg></div><div class="act" style="left:1044.2px;top:25.5px;color:#dc2f2f"><svg width="19" height="19" viewBox="0 0 24 24" fill="none" stroke="currentColor" stroke-width="1.75" stroke-linecap="round" stroke-linejoin="round" ><path d="M3 6h18"/><path d="M19 6v14c0 1-1 2-2 2H7c-1 0-2-1-2-2V6"/><path d="M8 6V4c0-1 1-2 2-2h4c1 0 2 1 2 2v2"/><line x1="10" x2="10" y1="11" y2="17"/><line x1="14" x2="14" y1="11" y2="17"/></svg></div></div><div class="row" style="top:694.70px;height:71.35px"><div class="t" style="top:25.6px;letter-spacing:0.354px;">Desktop Computers &amp; Workstations</div><div class="badge" style="top:21.6px;letter-spacing:0.185px;">Asset</div><div class="act" style="left:1005.2px;top:25.9px;color:#3366d6"><svg width="19" height="19" viewBox="0 0 24 24" fill="none" stroke="currentColor" stroke-width="1.7" stroke-linecap="round" stroke-linejoin="round" ><path d="M12 3H5a2 2 0 0 0-2 2v14a2 2 0 0 0 2 2h14a2 2 0 0 0 2-2v-7"/><path d="M18.375 2.625a1 1 0 0 1 3 3l-9.013 9.014a2 2 0 0 1-.853.505l-2.873.84a.5.5 0 0 1-.62-.62l.84-2.873a2 2 0 0 1 .506-.852z"/></svg></div><div class="act" style="left:1044.2px;top:25.5px;color:#dc2f2f"><svg width="19" height="19" viewBox="0 0 24 24" fill="none" stroke="currentColor" stroke-width="1.75" stroke-linecap="round" stroke-linejoin="round" ><path d="M3 6h18"/><path d="M19 6v14c0 1-1 2-2 2H7c-1 0-2-1-2-2V6"/><path d="M8 6V4c0-1 1-2 2-2h4c1 0 2 1 2 2v2"/><line x1="10" x2="10" y1="11" y2="17"/><line x1="14" x2="14" y1="11" y2="17"/></svg></div></div><div class="row" style="top:766.05px;height:71.35px"><div class="t" style="top:25.6px;letter-spacing:0.432px;">Network &amp; Communication Equipment</div><div class="badge" style="top:21.6px;letter-spacing:0.185px;">Asset</div><div class="act" style="left:1005.2px;top:25.9px;color:#3366d6"><svg width="19" height="19" viewBox="0 0 24 24" fill="none" stroke="currentColor" stroke-width="1.7" stroke-linecap="round" stroke-linejoin="round" ><path d="M12 3H5a2 2 0 0 0-2 2v14a2 2 0 0 0 2 2h14a2 2 0 0 0 2-2v-7"/><path d="M18.375 2.625a1 1 0 0 1 3 3l-9.013 9.014a2 2 0 0 1-.853.505l-2.873.84a.5.5 0 0 1-.62-.62l.84-2.873a2 2 0 0 1 .506-.852z"/></svg></div><div class="act" style="left:1044.2px;top:25.5px;color:#dc2f2f"><svg width="19" height="19" viewBox="0 0 24 24" fill="none" stroke="currentColor" stroke-width="1.75" stroke-linecap="round" stroke-linejoin="round" ><path d="M3 6h18"/><path d="M19 6v14c0 1-1 2-2 2H7c-1 0-2-1-2-2V6"/><path d="M8 6V4c0-1 1-2 2-2h4c1 0 2 1 2 2v2"/><line x1="10" x2="10" y1="11" y2="17"/><line x1="14" x2="14" y1="11" y2="17"/></svg></div></div><div class="row" style="top:837.40px;height:71.35px"><div class="t" style="top:25.6px;letter-spacing:0.164px;">Security Software Licenses</div><div class="badge" style="top:21.6px;letter-spacing:0.046px;">Licence</div><div class="act" style="left:1005.2px;top:25.9px;color:#3366d6"><svg width="19" height="19" viewBox="0 0 24 24" fill="none" stroke="currentColor" stroke-width="1.7" stroke-linecap="round" stroke-linejoin="round" ><path d="M12 3H5a2 2 0 0 0-2 2v14a2 2 0 0 0 2 2h14a2 2 0 0 0 2-2v-7"/><path d="M18.375 2.625a1 1 0 0 1 3 3l-9.013 9.014a2 2 0 0 1-.853.505l-2.873.84a.5.5 0 0 1-.62-.62l.84-2.873a2 2 0 0 1 .506-.852z"/></svg></div><div class="act" style="left:1044.2px;top:25.5px;color:#dc2f2f"><svg width="19" height="19" viewBox="0 0 24 24" fill="none" stroke="currentColor" stroke-width="1.75" stroke-linecap="round" stroke-linejoin="round" ><path d="M3 6h18"/><path d="M19 6v14c0 1-1 2-2 2H7c-1 0-2-1-2-2V6"/><path d="M8 6V4c0-1 1-2 2-2h4c1 0 2 1 2 2v2"/><line x1="10" x2="10" y1="11" y2="17"/><line x1="14" x2="14" y1="11" y2="17"/></svg></div></div><div class="row" style="top:908.75px;height:71.35px"><div class="t" style="top:25.6px;letter-spacing:0.046px;">Processor &amp; CPU Components</div><div class="badge" style="top:21.6px;letter-spacing:0.422px;">Components</div><div class="act" style="left:1005.2px;top:25.9px;color:#3366d6"><svg width="19" height="19" viewBox="0 0 24 24" fill="none" stroke="currentColor" stroke-width="1.7" stroke-linecap="round" stroke-linejoin="round" ><path d="M12 3H5a2 2 0 0 0-2 2v14a2 2 0 0 0 2 2h14a2 2 0 0 0 2-2v-7"/><path d="M18.375 2.625a1 1 0 0 1 3 3l-9.013 9.014a2 2 0 0 1-.853.505l-2.873.84a.5.5 0 0 1-.62-.62l.84-2.873a2 2 0 0 1 .506-.852z"/></svg></div><div class="act" style="left:1044.2px;top:25.5px;color:#dc2f2f"><svg width="19" height="19" viewBox="0 0 24 24" fill="none" stroke="currentColor" stroke-width="1.75" stroke-linecap="round" stroke-linejoin="round" ><path d="M3 6h18"/><path d="M19 6v14c0 1-1 2-2 2H7c-1 0-2-1-2-2V6"/><path d="M8 6V4c0-1 1-2 2-2h4c1 0 2 1 2 2v2"/><line x1="10" x2="10" y1="11" y2="17"/><line x1="14" x2="14" y1="11" y2="17"/></svg></div></div><div class="row" style="top:980.10px;height:71.35px"><div class="t" style="top:25.6px;letter-spacing:0.153px;">Cleaning &amp; Maintenance Supplies</div><div class="badge" style="top:21.6px;letter-spacing:0.107px;">Consumables</div><div class="act" style="left:1005.2px;top:25.9px;color:#3366d6"><svg width="19" height="19" viewBox="0 0 24 24" fill="none" stroke="currentColor" stroke-width="1.7" stroke-linecap="round" stroke-linejoin="round" ><path d="M12 3H5a2 2 0 0 0-2 2v14a2 2 0 0 0 2 2h14a2 2 0 0 0 2-2v-7"/><path d="M18.375 2.625a1 1 0 0 1 3 3l-9.013 9.014a2 2 0 0 1-.853.505l-2.873.84a.5.5 0 0 1-.62-.62l.84-2.873a2 2 0 0 1 .506-.852z"/></svg></div><div class="act" style="left:1044.2px;top:25.5px;color:#dc2f2f"><svg width="19" height="19" viewBox="0 0 24 24" fill="none" stroke="currentColor" stroke-width="1.75" stroke-linecap="round" stroke-linejoin="round" ><path d="M3 6h18"/><path d="M19 6v14c0 1-1 2-2 2H7c-1 0-2-1-2-2V6"/><path d="M8 6V4c0-1 1-2 2-2h4c1 0 2 1 2 2v2"/><line x1="10" x2="10" y1="11" y2="17"/><line x1="14" x2="14" y1="11" y2="17"/></svg></div></div></div></body></html>
